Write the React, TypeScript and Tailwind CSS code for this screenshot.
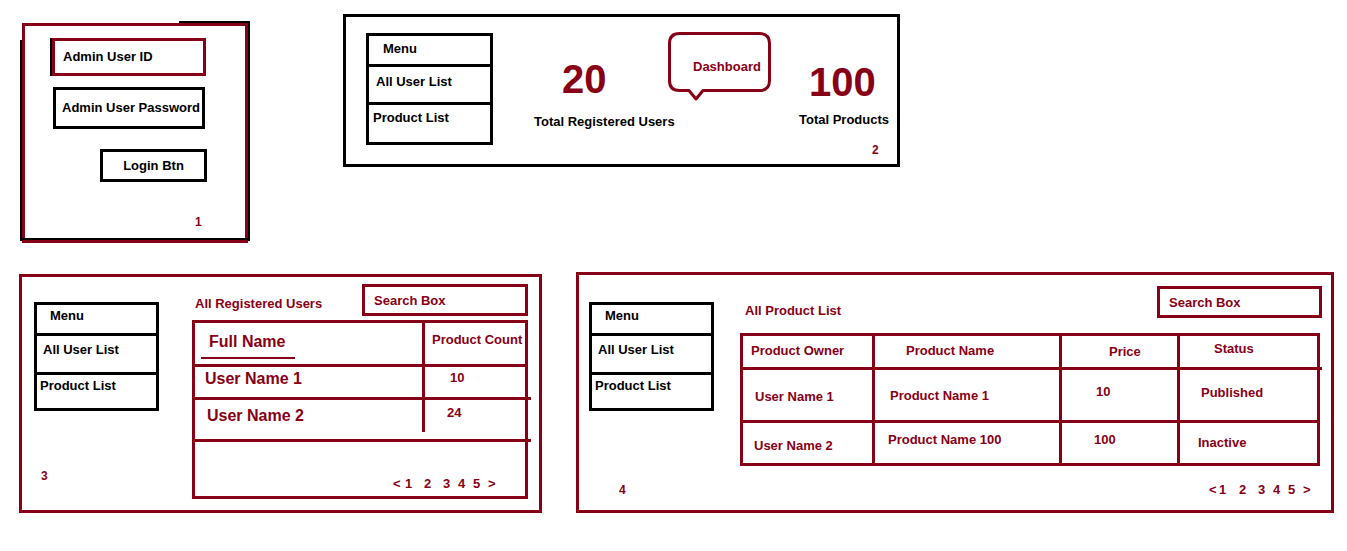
const maroonBox = "border-[3px] border-[#880015]";

function SideMenu({
  box,
  menuRow,
  usersRow,
  productsRow,
}: {
  box: string;
  menuRow: string;
  usersRow: string;
  productsRow: string;
}) {
  return (
    <div className={`flex flex-col border-[3px] border-black text-black ${box}`}>
      <div className={`border-b-[3px] border-black ${menuRow}`}>Menu</div>
      <div className={`border-b-[3px] border-black ${usersRow}`}>All User List</div>
      <div className={`flex-1 ${productsRow}`}>Product List</div>
    </div>
  );
}

function Pager({ steps }: { steps: string[] }) {
  const chars = ["<", "1", "2", "3", "4", "5", ">"];
  return (
    <div className="flex text-[13px] leading-4 text-[#880015]">
      {chars.map((c, i) => (
        <span key={c} className={steps[i]}>
          {c}
        </span>
      ))}
    </div>
  );
}

function LoginPanel() {
  return (
    <div className={`relative ml-[22px] mt-[23px] h-[220px] w-[226px] ${maroonBox}`}>
      {/* the black sketch frame peeking out behind the red one */}
      <div className="absolute left-[-5px] top-[14px] h-[201px] w-[2px] bg-black" />
      <div className="absolute left-[223px] top-[-5px] h-[220px] w-[2px] bg-black" />
      <div className="absolute left-[154px] top-[-5px] h-[2px] w-[71px] bg-black" />
      <div className="absolute left-[-3px] top-[212px] h-[2px] w-[226px] bg-black" />

      <div className={`ml-[27px] mt-[12px] flex h-[38px] w-[154px] items-center pl-[8px] text-black shadow-[-2px_0_0_#000] ${maroonBox}`}>
        Admin User ID
      </div>
      <div className="ml-[28px] mt-[11px] flex h-[42px] w-[152px] items-center border-[3px] border-black pl-[6px] text-black">
        Admin User Password
      </div>
      <div className="ml-[75px] mt-[20px] flex h-[33px] w-[107px] items-center justify-center border-[3px] border-black text-black">
        Login Btn
      </div>
      <div className="ml-[170px] mt-[32px] text-[12px] text-[#880015]">1</div>
    </div>
  );
}

function DashboardPanel() {
  return (
    <div className="ml-[95px] mt-[14px] flex h-[153px] w-[557px] items-start border-[3px] border-black">
      <SideMenu
        box="ml-[20px] mt-[16px] h-[112px] w-[127px]"
        menuRow="h-[31px] pl-[14px] pt-[5px]"
        usersRow="h-[38px] pl-[7px] pt-[7px]"
        productsRow="pl-[4px] pt-[5px]"
      />

      <div className="ml-[41px] flex w-[141px] flex-col">
        <div className="ml-[28px] mt-[42px] text-[40px] leading-10 text-[#880015]">20</div>
        <div className="mt-[15px] whitespace-nowrap text-black">Total Registered Users</div>
      </div>

      <div className="relative -ml-[7px] mt-[15px] h-[70px] w-[103px] pl-[25px] pt-[27px] text-[#880015]">
        <svg className="absolute inset-0" width="103" height="70" viewBox="0 0 103 70" fill="none">
          <path
            d="M11.5 1.5 H91.5 Q101.5 1.5 101.5 11.5 V48.5 Q101.5 58.5 91.5 58.5 H35 L28 67 L21 58.5 H11.5 Q1.5 58.5 1.5 48.5 V11.5 Q1.5 1.5 11.5 1.5 Z"
            stroke="#880015"
            strokeWidth="3"
            strokeLinejoin="round"
          />
        </svg>
        <span className="relative">Dashboard</span>
      </div>

      <div className="ml-[28px] flex w-[91px] flex-col">
        <div className="ml-[10px] mt-[45px] text-[40px] leading-10 text-[#880015]">100</div>
        <div className="mt-[10px] whitespace-nowrap text-black">Total Products</div>
        <div className="ml-[73px] mt-[14px] text-[12px] text-[#880015]">2</div>
      </div>
    </div>
  );
}

function UsersPanel() {
  return (
    <div className={`ml-[19px] mt-[24px] flex h-[239px] w-[523px] items-start text-[#880015] ${maroonBox}`}>
      <div className="ml-[12px] mt-[25px] flex flex-col">
        <SideMenu
          box="h-[109px] w-[125px]"
          menuRow="h-[31px] pl-[13px] pt-[3px]"
          usersRow="h-[39px] pl-[6px] pt-[6px]"
          productsRow="pl-[3px] pt-[3px]"
        />
        <div className="ml-[7px] mt-[57px] text-[12px]">3</div>
      </div>

      <div className="ml-[33px] mt-[7px] flex w-[336px] flex-col">
        <div className="flex items-start justify-between">
          <div className="mt-[12px] pl-[3px]">All Registered Users</div>
          <div className={`h-[32px] w-[166px] pl-[9px] pt-[6px] ${maroonBox}`}>Search Box</div>
        </div>

        <div className={`mt-[4px] flex h-[179px] flex-col ${maroonBox}`}>
          <div className="flex h-[44px] border-b-[3px] border-[#880015]">
            <div className="w-[230px] border-r-[3px] border-[#880015] pt-[9px]">
              <div className="pl-[14px] text-[16px] leading-5">Full Name</div>
              <div className="ml-[6px] mt-[5px] h-[2px] w-[94px] bg-[#880015]" />
            </div>
            <div className="pl-[7px] pt-[9px]">Product Count</div>
          </div>
          <div className="-mr-[6px] flex h-[33px] border-b-[3px] border-[#880015]">
            <div className="w-[230px] border-r-[3px] border-[#880015] pl-[10px] pt-[2px] text-[16px] leading-5">
              User Name 1
            </div>
            <div className="pl-[25px] pt-[3px]">10</div>
          </div>
          <div className="-mr-[6px] flex h-[42px] border-b-[3px] border-[#880015]">
            <div className="mb-[7px] w-[230px] border-r-[3px] border-[#880015] pl-[12px] pt-[6px] text-[16px] leading-5">
              User Name 2
            </div>
            <div className="pl-[22px] pt-[5px]">24</div>
          </div>
          <div className="pl-[198px] pt-[34px]">
            <Pager steps={["w-[12px]", "w-[19px]", "w-[19px]", "w-[15px]", "w-[15px]", "w-[15px]", ""]} />
          </div>
        </div>
      </div>
    </div>
  );
}

const cell = "border-r-[3px] border-[#880015]";

function ProductsPanel() {
  return (
    <div className={`ml-[34px] mt-[22px] flex h-[241px] w-[758px] items-start text-[#880015] ${maroonBox}`}>
      <div className="ml-[10px] mt-[27px] flex flex-col">
        <SideMenu
          box="h-[109px] w-[125px]"
          menuRow="h-[31px] pl-[13px] pt-[3px]"
          usersRow="h-[39px] pl-[6px] pt-[6px]"
          productsRow="pl-[3px] pt-[3px]"
        />
        <div className="ml-[30px] mt-[71px] text-[12px]">4</div>
      </div>

      <div className="ml-[26px] mt-[11px] flex w-[582px] flex-col">
        <div className="flex items-start justify-between">
          <div className="mt-[17px] pl-[5px]">All Product List</div>
          <div className={`h-[32px] w-[165px] pl-[9px] pt-[6px] ${maroonBox}`}>Search Box</div>
        </div>

        <div className={`mt-[14px] flex h-[133px] w-[580px] flex-col ${maroonBox}`}>
          <div className="-mr-[5px] flex h-[34px] border-b-[3px] border-[#880015]">
            <div className={`w-[132px] pl-[8px] pt-[7px] ${cell}`}>Product Owner</div>
            <div className={`w-[187px] pl-[31px] pt-[7px] ${cell}`}>Product Name</div>
            <div className={`w-[118px] pl-[47px] pt-[8px] ${cell}`}>Price</div>
            <div className="pl-[34px] pt-[5px]">Status</div>
          </div>
          <div className="flex h-[53px] border-b-[3px] border-[#880015]">
            <div className={`w-[132px] pl-[12px] pt-[19px] ${cell}`}>User Name 1</div>
            <div className={`w-[187px] pl-[15px] pt-[18px] ${cell}`}>Product Name 1</div>
            <div className={`w-[118px] pl-[34px] pt-[14px] ${cell}`}>10</div>
            <div className="pl-[21px] pt-[15px]">Published</div>
          </div>
          <div className="flex flex-1">
            <div className={`w-[132px] pl-[11px] pt-[15px] ${cell}`}>User Name 2</div>
            <div className={`w-[187px] pl-[13px] pt-[9px] ${cell}`}>Product Name 100</div>
            <div className={`w-[118px] pl-[32px] pt-[9px] ${cell}`}>100</div>
            <div className="pl-[18px] pt-[12px]">Inactive</div>
          </div>
        </div>

        <div className="mt-[16px] pl-[469px]">
          <Pager steps={["w-[10px]", "w-[20px]", "w-[19px]", "w-[15px]", "w-[15px]", "w-[15px]", ""]} />
        </div>
      </div>
    </div>
  );
}

export default function App() {
  return (
    <div className="h-[551px] w-[1347px] overflow-hidden bg-white font-['Liberation_Sans',Arial,sans-serif] text-[13px] font-bold leading-4">
      <div className="flex h-[250px] items-start">
        <LoginPanel />
        <DashboardPanel />
      </div>
      <div className="flex items-start">
        <UsersPanel />
        <ProductsPanel />
      </div>
    </div>
  );
}
